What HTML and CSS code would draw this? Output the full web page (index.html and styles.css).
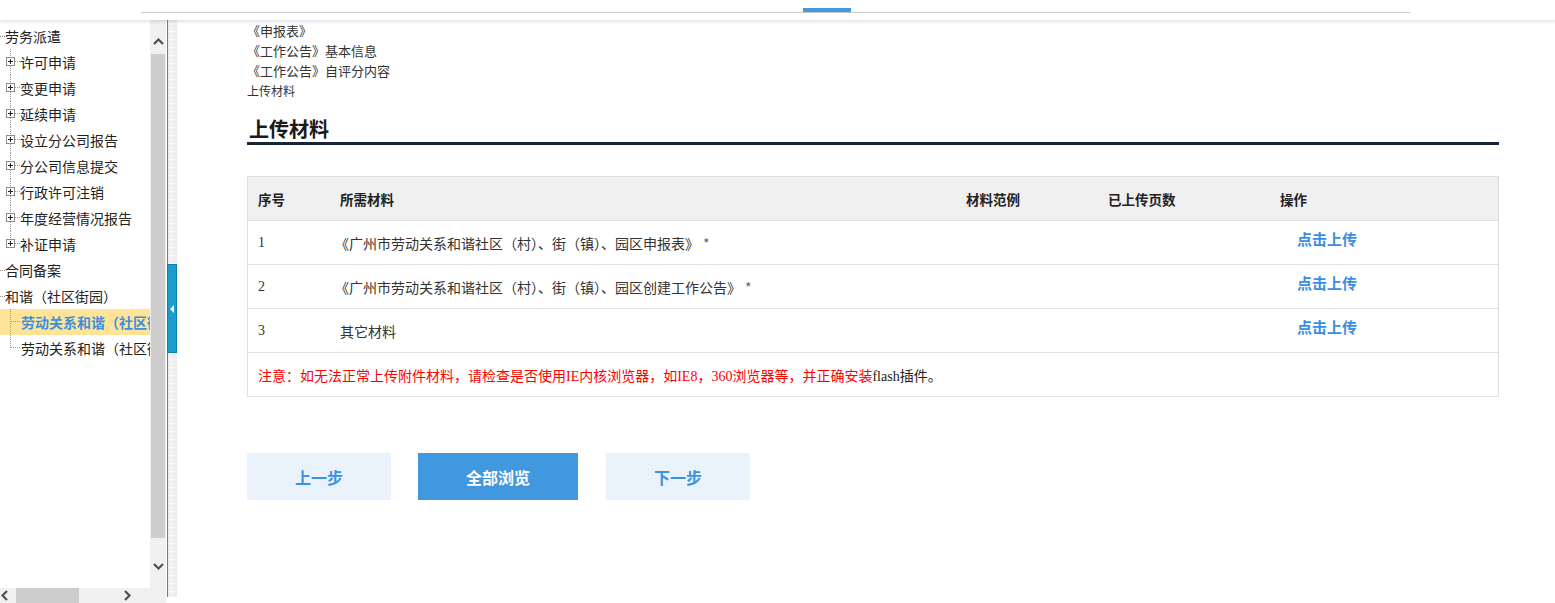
FILE: index.html
```html
<!DOCTYPE html>
<html lang="zh-CN">
<head>
<meta charset="utf-8">
<title>上传材料</title>
<link rel="stylesheet" href="styles.css">
</head>
<body>
<svg class="defs" width="0" height="0" aria-hidden="true">
  <defs>
    <symbol id="plus-mid" viewBox="0 0 20 26">
      <path d="M10.5 0V8M10.5 17V26M15 12.5H20" stroke="#9a9a9a" stroke-dasharray="1 1" fill="none"/>
      <rect x="6.5" y="8.5" width="8" height="8" fill="#fff" stroke="#8c8c8c"/>
      <path d="M8 12.5H13M10.5 10V15" stroke="#222" fill="none"/>
    </symbol>
    <symbol id="plus-last" viewBox="0 0 20 26">
      <path d="M10.5 0V8M15 12.5H20" stroke="#9a9a9a" stroke-dasharray="1 1" fill="none"/>
      <rect x="6.5" y="8.5" width="8" height="8" fill="#fff" stroke="#8c8c8c"/>
      <path d="M8 12.5H13M10.5 10V15" stroke="#222" fill="none"/>
    </symbol>
    <symbol id="leaf-mid" viewBox="0 0 21 26">
      <path d="M10.5 0V26M11 12.5H20" stroke="#9a9a9a" stroke-dasharray="1 1" fill="none"/>
    </symbol>
    <symbol id="leaf-last" viewBox="0 0 21 26">
      <path d="M10.5 0V13M11 12.5H20" stroke="#9a9a9a" stroke-dasharray="1 1" fill="none"/>
    </symbol>
  </defs>
</svg>

<header class="topbar">
  <div class="tabs"><span class="tab-active"></span></div>
</header>

<div class="layout">
  <aside class="sidebar">
    <div class="sb-body">
      <ul class="tree">
        <li class="node top"><span class="hline"></span>劳务派遣</li>
        <li class="node"><svg class="ico" width="20" height="26"><use href="#plus-mid"/></svg>许可申请</li>
        <li class="node"><svg class="ico" width="20" height="26"><use href="#plus-mid"/></svg>变更申请</li>
        <li class="node"><svg class="ico" width="20" height="26"><use href="#plus-mid"/></svg>延续申请</li>
        <li class="node"><svg class="ico" width="20" height="26"><use href="#plus-mid"/></svg>设立分公司报告</li>
        <li class="node"><svg class="ico" width="20" height="26"><use href="#plus-mid"/></svg>分公司信息提交</li>
        <li class="node"><svg class="ico" width="20" height="26"><use href="#plus-mid"/></svg>行政许可注销</li>
        <li class="node"><svg class="ico" width="20" height="26"><use href="#plus-mid"/></svg>年度经营情况报告</li>
        <li class="node"><svg class="ico" width="20" height="26"><use href="#plus-last"/></svg>补证申请</li>
        <li class="node top"><span class="hline"></span>合同备案</li>
        <li class="node top"><span class="hline"></span>和谐（社区街园）</li>
        <li class="node selected"><svg class="ico" width="21" height="26"><use href="#leaf-mid"/></svg><span class="clip">劳动关系和谐（社区街园）申报</span></li>
        <li class="node"><svg class="ico" width="21" height="26"><use href="#leaf-last"/></svg><span class="clip">劳动关系和谐（社区街园）公告</span></li>
      </ul>
      <div class="vscroll">
        <div class="vbtn up"><svg width="11" height="7" viewBox="0 0 11 7"><path d="M1 6L5.5 1.5L10 6" stroke="#505050" stroke-width="2.2" fill="none"/></svg></div>
        <div class="vthumb"></div>
        <div class="vspace"></div>
        <div class="vbtn down"><svg width="11" height="7" viewBox="0 0 11 7"><path d="M1 1L5.5 5.5L10 1" stroke="#505050" stroke-width="2.2" fill="none"/></svg></div>
      </div>
    </div>
    <div class="hscroll">
      <div class="hbtn left"><svg width="8" height="11" viewBox="0 0 8 11"><path d="M7 1L2.5 5.5L7 10" stroke="#505050" stroke-width="2.2" fill="none"/></svg></div>
      <div class="hthumb"></div>
      <div class="hbtn right"><svg width="8" height="11" viewBox="0 0 8 11"><path d="M1 1L5.5 5.5L1 10" stroke="#505050" stroke-width="2.2" fill="none"/></svg></div>
    </div>
  </aside>

  <div class="divider">
    <div class="handle"><span class="tri"></span></div>
  </div>

  <main class="main">
    <div class="crumbs">
      <div class="crumb">《申报表》</div>
      <div class="crumb">《工作公告》基本信息</div>
      <div class="crumb">《工作公告》自评分内容</div>
      <div class="crumb current">上传材料</div>
    </div>

    <h2 class="section-title">上传材料</h2>

    <div class="tbl">
      <div class="row head">
        <div class="cell">序号</div>
        <div class="cell">所需材料</div>
        <div class="cell">材料范例</div>
        <div class="cell">已上传页数</div>
        <div class="cell">操作</div>
      </div>
      <div class="row">
        <div class="cell num">1</div>
        <div class="cell name">《广州市劳动关系和谐社区（村）、街（镇）、园区申报表》<span class="req">*</span></div>
        <div class="cell"></div>
        <div class="cell"></div>
        <div class="cell op"><a class="upload">点击上传</a></div>
      </div>
      <div class="row">
        <div class="cell num">2</div>
        <div class="cell name">《广州市劳动关系和谐社区（村）、街（镇）、园区创建工作公告》<span class="req">*</span></div>
        <div class="cell"></div>
        <div class="cell"></div>
        <div class="cell op"><a class="upload">点击上传</a></div>
      </div>
      <div class="row">
        <div class="cell num">3</div>
        <div class="cell">其它材料</div>
        <div class="cell"></div>
        <div class="cell"></div>
        <div class="cell op"><a class="upload">点击上传</a></div>
      </div>
      <div class="row notice">
        <div class="cell">注意：如无法正常上传附件材料，请检查是否使用IE内核浏览器，如IE8，360浏览器等，并正确安装<span class="dark">flash插件。</span></div>
      </div>
    </div>

    <div class="actions">
      <button class="btn light">上一步</button>
      <button class="btn primary">全部浏览</button>
      <button class="btn light next">下一步</button>
    </div>
  </main>
</div>
</body>
</html>
```

FILE: styles.css
```css
* { box-sizing: border-box; }

html, body {
  margin: 0;
  padding: 0;
  background: #fff;
}

body {
  width: 1555px;
  height: 603px;
  overflow: hidden;
  font-family: "Noto Sans CJK SC", "Microsoft YaHei", sans-serif;
  color: #222;
}

.defs { display: block; width: 0; height: 0; overflow: hidden; }

/* top bar */
.topbar {
  height: 20px;
  background: #fff;
  position: relative;
  z-index: 2;
  box-shadow: 0 2px 3px rgba(60, 75, 110, 0.16);
}

.tabs {
  margin-left: 141px;
  width: 1269px;
  height: 13px;
  border-bottom: 1px solid #c8c8c8;
  display: flex;
  align-items: flex-end;
}

.tab-active {
  display: block;
  margin-left: 662px;
  width: 48px;
  height: 4px;
  background: #4399dd;
}

/* layout */
.layout {
  display: flex;
  height: 583px;
}

/* sidebar */
.sidebar {
  width: 167px;
  flex: none;
  display: flex;
  flex-direction: column;
  border-right: 1px solid #fff;
}

.sb-body {
  display: flex;
  height: 568px;
}

.tree {
  list-style: none;
  margin: 0;
  padding: 3px 0 0 0;
  width: 150px;
  overflow: hidden;
  font-size: 14px;
  color: #222;
}

.node {
  display: flex;
  align-items: center;
  height: 26px;
  white-space: nowrap;
  line-height: 26px;
}

.node .ico { flex: none; display: block; }

.clip {
  display: block;
  overflow: hidden;
  white-space: nowrap;
  width: 129px;
  flex: none;
}

.hline {
  display: block;
  flex: none;
  width: 5px;
  height: 0;
  border-top: 1px dotted #8a8a8a;
}

.node.selected {
  background: #fee498;
  color: #3d90e0;
  font-weight: bold;
}

.vscroll {
  width: 16px;
  flex: none;
  background: #f0f0f0;
  display: flex;
  flex-direction: column;
}

.vbtn {
  display: flex;
  justify-content: center;
  flex: none;
}

.vbtn.up { height: 34px; padding-top: 18px; }
.vbtn.down { height: 34px; padding-top: 9px; }

.vthumb {
  height: 484px;
  margin: 0 1px;
  background: #cdcdcd;
  flex: none;
}

.vspace { flex: 1; }

.hscroll {
  height: 15px;
  background: #f0f0f0;
  display: flex;
  align-items: center;
}

.hbtn { display: flex; align-items: center; flex: none; }
.hbtn.left { width: 16px; }
.hbtn.right { margin-left: 45px; }

.hthumb {
  width: 63px;
  height: 15px;
  background: #cdcdcd;
  flex: none;
}

/* divider */
.divider {
  width: 10px;
  flex: none;
  height: 577px;
  border-left: 1px solid #2b8fd6;
  background-color: #ededed;
  background-image:
    linear-gradient(90deg, transparent 3px, #f8f8f8 3px, #f8f8f8 4px, transparent 4px),
    linear-gradient(transparent 3px, #f8f8f8 3px, #f8f8f8 4px, transparent 4px);
  background-size: 8px 8px;
  display: flex;
  flex-direction: column;
  justify-content: center;
}

.handle {
  margin-left: -1px;
  width: 10px;
  height: 89px;
  background: #1b9ccf;
  border: 1px solid #137fb0;
  display: flex;
  align-items: center;
  padding-left: 2px;
}

.tri {
  display: block;
  width: 0;
  height: 0;
  border-top: 4px solid transparent;
  border-bottom: 4px solid transparent;
  border-right: 4px solid #fff;
}

/* main */
.main {
  flex: 1;
  padding: 1px 0 0 70px;
}

.crumbs {
  font-size: 13px;
  color: #333;
}

.crumb {
  height: 20px;
  line-height: 20px;
  white-space: nowrap;
}

.crumb.current { font-size: 12px; }

.section-title {
  width: 1252px;
  margin: 15px 0 0 0;
  padding-left: 2px;
  font-size: 20px;
  line-height: 25px;
  padding-bottom: 1px;
  font-weight: bold;
  color: #1a1a1a;
  border-bottom: 3px solid #16253a;
}

.tbl {
  width: 1252px;
  margin-top: 31px;
  border: 1px solid #e0e0e0;
}

.row {
  display: grid;
  grid-template-columns: 82px 626px 142px 172px 228px;
  height: 44px;
  border-top: 1px solid #e0e0e0;
  align-items: center;
  font-size: 14px;
  color: #333;
}

.row.head {
  height: 43px;
  border-top: none;
  background: #f0f0f0;
  font-weight: bold;
  font-size: 13.5px;
  color: #222;
}

.cell {
  padding-left: 10px;
  white-space: nowrap;
}

.cell.name { padding-left: 5px; }

.num {
  font-family: "Liberation Serif", "Noto Sans CJK SC", serif;
  font-size: 14px;
}

.req {
  margin-left: 4px;
  color: #666;
}

.op {
  padding-left: 27px;
  padding-bottom: 8px;
}

.upload {
  color: #3a8fe2;
  font-weight: bold;
  font-size: 15px;
  text-decoration: none;
  cursor: pointer;
}

.row.notice {
  grid-template-columns: 1fr;
  color: #f00;
  font-family: "Liberation Serif", "Noto Sans CJK SC", serif;
  font-size: 14px;
}

.dark { color: #222; }

.actions {
  display: flex;
  gap: 27px;
  margin-top: 56px;
}

.btn {
  height: 47px;
  border: none;
  margin: 0;
  padding: 0;
  font-family: "Noto Sans CJK SC", "Microsoft YaHei", sans-serif;
  font-size: 16px;
  font-weight: bold;
  cursor: pointer;
}

.btn.light {
  width: 144px;
  background: #eaf3fb;
  color: #3b93e0;
}

.btn.primary {
  width: 160px;
  background: #4298de;
  color: #fff;
}

.btn.next { margin-left: 1px; }
```
